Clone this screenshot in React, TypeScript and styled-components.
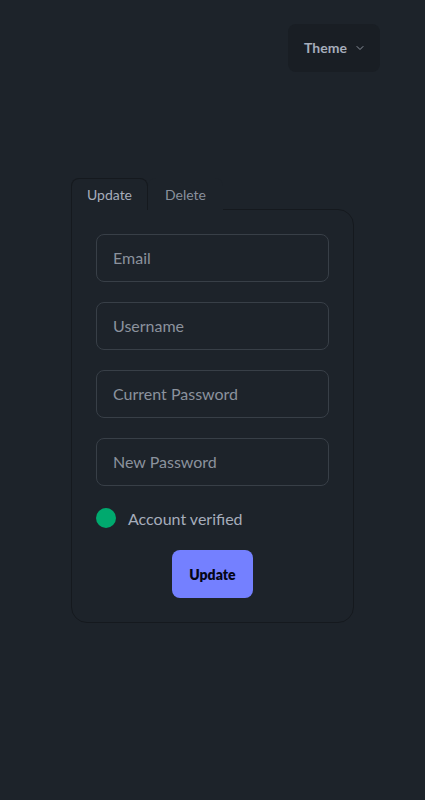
import React from "react";
import styled, { createGlobalStyle } from "styled-components";

const Global = createGlobalStyle`
  html, body { margin: 0; padding: 0; background: #1d232a; }
  body { font-family: "Lato", "Noto Sans", sans-serif; color: #a6adbb; }
  #root { min-height: 800px; }
  * { box-sizing: border-box; }
`;

const Page = styled.div`
  min-height: 800px;
  display: flex;
  flex-direction: column;
`;

const TopBar = styled.div`
  display: flex;
  justify-content: flex-end;
  padding: 24px 45px 0 0;
`;

const ThemeButton = styled.button`
  height: 48px;
  width: 92px;
  border: none;
  border-radius: 8px;
  background: #191e24;
  color: #a6adbb;
  font-family: inherit;
  font-weight: 700;
  font-size: 14px;
  display: flex;
  align-items: center;
  justify-content: center;
  gap: 7px;
  padding: 0 0 1px 2px;
  cursor: pointer;
  svg { color: #8b929d; }
`;

const Main = styled.div`
  padding: 106px 0 0 71px;
`;

const Tabs = styled.div`
  display: flex;
  width: 283px;
`;

const Tab = styled.div<{ $active?: boolean }>`
  height: 32px;
  padding: 0 16px;
  font-size: 14px;
  display: flex;
  align-items: center;
  justify-content: center;
  color: ${(p) => (p.$active ? "#a6adbb" : "#a6adbbcc")};
  border: 1px solid ${(p) => (p.$active ? "#15191e" : "transparent")};
  border-bottom: ${(p) => (p.$active ? "none" : "1px solid transparent")};
  border-radius: 8px 8px 0 0;
  width: ${(p) => (p.$active ? "77px" : "auto")};
  position: relative;
  z-index: 1;
  background: #1d232a;
`;

const Card = styled.div`
  width: 283px;
  margin-top: -1px;
  border: 1px solid #15191e;
  border-radius: 0 16px 16px 16px;
  padding: 24px;
  display: flex;
  flex-direction: column;
  gap: 20px;
`;

const Input = styled.input`
  height: 48px;
  width: 100%;
  border: 1px solid #383f47;
  border-radius: 8px;
  background: #1d232a;
  padding: 0 16px 1px;
  font-family: inherit;
  font-size: 16px;
  color: #a6adbb;
  outline: none;
  &::placeholder { color: #8b929d; }
`;

const StatusRow = styled.div`
  display: flex;
  align-items: center;
  gap: 12px;
  height: 20px;
  margin-top: 2px;
  font-size: 16px;
  color: #a6adbb;
`;

const Dot = styled.span`
  width: 20px;
  height: 20px;
  border-radius: 50%;
  background: #00a96e;
  flex: none;
`;

const Actions = styled.div`
  display: flex;
  justify-content: center;
  margin-top: 2px;
`;

const PrimaryButton = styled.button`
  height: 48px;
  padding: 0 17px;
  border: none;
  border-radius: 8px;
  background: #7480ff;
  color: #050617;
  font-family: inherit;
  font-weight: 800;
  font-size: 14px;
  cursor: pointer;
`;

export default function App() {
  return (
    <Page>
      <Global />
      <TopBar>
        <ThemeButton>
          Theme
          <svg width="12" height="12" viewBox="0 0 24 24" fill="none" stroke="currentColor" strokeWidth="2" strokeLinecap="round" strokeLinejoin="round">
            <path d="M6 9l6 6 6-6" />
          </svg>
        </ThemeButton>
      </TopBar>
      <Main>
        <Tabs>
          <Tab $active>Update</Tab>
          <Tab>Delete</Tab>
        </Tabs>
        <Card>
          <Input placeholder="Email" />
          <Input placeholder="Username" />
          <Input placeholder="Current Password" type="password" />
          <Input placeholder="New Password" type="password" />
          <StatusRow>
            <Dot />
            Account verified
          </StatusRow>
          <Actions>
            <PrimaryButton>Update</PrimaryButton>
          </Actions>
        </Card>
      </Main>
    </Page>
  );
}
